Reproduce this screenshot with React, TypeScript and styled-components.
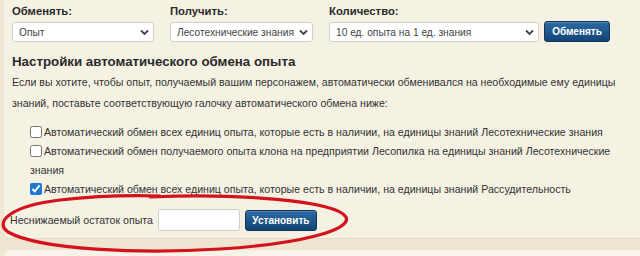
import React, { useState } from 'react';
import styled, { createGlobalStyle } from 'styled-components';

const GlobalStyle = createGlobalStyle`
  html, body {
    margin: 0;
    padding: 0;
    background: #efe6d1;
  }
  body {
    font-family: 'Liberation Sans', Arial, sans-serif;
    color: #333;
  }
`;

const Page = styled.div`
  width: 640px;
  height: 256px;
  overflow: hidden;
  position: relative;
`;

const Panel = styled.section`
  margin-left: 4px;
  height: 239px;
  box-sizing: border-box;
  padding: 3px 0 0 8px;
  background: #f5f2e4;
  border-bottom: 1px solid #e2dccb;
  border-radius: 0 0 0 6px;
`;

const NextPanel = styled.div`
  margin: 10px 0 0 4px;
  height: 20px;
  background: #f7f3e8;
  border-top: 1px solid #ebe5d4;
  border-radius: 6px 0 0 0;
`;

const ExchangeRow = styled.div`
  display: flex;
  align-items: flex-end;
  gap: 16px;
`;

const Field = styled.div<{ $width: number }>`
  display: flex;
  flex-direction: column;
  gap: 3px;
  width: ${(p) => p.$width}px;
`;

const Label = styled.label`
  font-weight: bold;
  font-size: 11.3px;
  line-height: 16px;
  color: #2a2a2a;
`;

const SelectBox = styled.div`
  position: relative;
  height: 20px;
  box-sizing: border-box;
  border: 1px solid #cfcfcf;
  border-radius: 3px;
  background: #fff;
  display: flex;
  align-items: center;
  padding: 0 14px 0 6px;
  font-size: 10.2px;
  color: #444;
  white-space: nowrap;
  overflow: hidden;

  svg {
    position: absolute;
    right: 4px;
    top: 6px;
  }
`;

const BlueButton = styled.button`
  height: 21px;
  box-sizing: border-box;
  padding: 0;
  border: 1px solid #0d3459;
  border-radius: 3px;
  background: linear-gradient(#2c6aa3, #124576);
  color: #fff;
  font-family: inherit;
  font-weight: bold;
  font-size: 10px;
  cursor: pointer;
  box-shadow: inset 0 1px 0 rgba(255, 255, 255, 0.2);
`;

const ExchangeButton = styled(BlueButton)`
  margin-left: -11px;
  width: 66px;
`;

const Heading = styled.h3`
  margin: 11px 0 0;
  font-size: 13.3px;
  line-height: 18px;
  font-weight: bold;
  color: #2a2a2a;
`;

const Paragraph = styled.p`
  margin: 1px 0 0;
  font-size: 10.6px;
  line-height: 21px;
  width: 610px;
`;

const OptionList = styled.ul`
  list-style: none;
  margin: 9px 0 0;
  padding: 0 0 0 18px;
  display: flex;
  flex-direction: column;
`;

const OptionItem = styled.li`
  font-size: 10.6px;
  line-height: 19px;
  width: 590px;

  input {
    width: 12px;
    height: 12px;
    margin: 0 2px 0 0;
    vertical-align: -2px;
    accent-color: #1f78d1;
  }
`;

const RemainderRow = styled.div`
  display: flex;
  align-items: center;
  gap: 5px;
  margin: 10px 0 0 -2px;
  font-size: 10.6px;
`;

const NumberInput = styled.input`
  width: 82px;
  height: 22px;
  box-sizing: border-box;
  border: 1px solid #cfcfcf;
  border-radius: 3px;
  background: #fff;
`;

const SetButton = styled(BlueButton)`
  width: 72px;
`;

const Annotation = styled.svg`
  position: absolute;
  left: 0;
  top: 190px;
  pointer-events: none;
`;

const Chevron = () => (
  <svg width="9" height="7" viewBox="0 0 9 7">
    <path d="M1 1.5 L4.5 5 L8 1.5" fill="none" stroke="#444" strokeWidth="1.8" />
  </svg>
);

const options = [
  {
    text: 'Автоматический обмен всех единиц опыта, которые есть в наличии, на единицы знаний Лесотехнические знания',
    checked: false,
  },
  {
    text: 'Автоматический обмен получаемого опыта клона на предприятии Лесопилка на единицы знаний Лесотехнические знания',
    checked: false,
  },
  {
    text: 'Автоматический обмен всех единиц опыта, которые есть в наличии, на единицы знаний Рассудительность',
    checked: true,
  },
];

const App = () => {
  const [checks, setChecks] = useState(options.map((o) => o.checked));

  return (
    <Page>
      <GlobalStyle />
      <Panel>
        <ExchangeRow>
          <Field $width={142}>
            <Label>Обменять:</Label>
            <SelectBox>
              Опыт
              <Chevron />
            </SelectBox>
          </Field>
          <Field $width={143}>
            <Label>Получить:</Label>
            <SelectBox>
              Лесотехнические знания
              <Chevron />
            </SelectBox>
          </Field>
          <Field $width={210}>
            <Label>Количество:</Label>
            <SelectBox>
              10 ед. опыта на 1 ед. знания
              <Chevron />
            </SelectBox>
          </Field>
          <ExchangeButton>Обменять</ExchangeButton>
        </ExchangeRow>

        <Heading>Настройки автоматического обмена опыта</Heading>
        <Paragraph>
          Если вы хотите, чтобы опыт, получаемый вашим персонажем, автоматически обменивался на
          необходимые ему единицы знаний, поставьте соответствующую галочку автоматического обмена
          ниже:
        </Paragraph>

        <OptionList>
          {options.map((o, idx) => (
            <OptionItem key={idx}>
              <input
                type="checkbox"
                checked={checks[idx]}
                onChange={() => setChecks(checks.map((c, i) => (i === idx ? !c : c)))}
              />
              {o.text}
            </OptionItem>
          ))}
        </OptionList>

        <RemainderRow>
          Неснижаемый остаток опыта
          <NumberInput type="text" />
          <SetButton>Установить</SetButton>
        </RemainderRow>
      </Panel>
      <NextPanel />

      <Annotation width="360" height="66" viewBox="0 0 360 66">
        <path
          d="M150 7 C 230 3, 335 10, 346 27 C 352 40, 300 54, 220 59 C 140 64, 40 60, 8 42 C -6 32, 10 16, 60 10 C 95 6, 125 5, 160 6"
          fill="none"
          stroke="#d4121c"
          strokeWidth="3.2"
          strokeLinecap="round"
        />
      </Annotation>
    </Page>
  );
};

export default App;
